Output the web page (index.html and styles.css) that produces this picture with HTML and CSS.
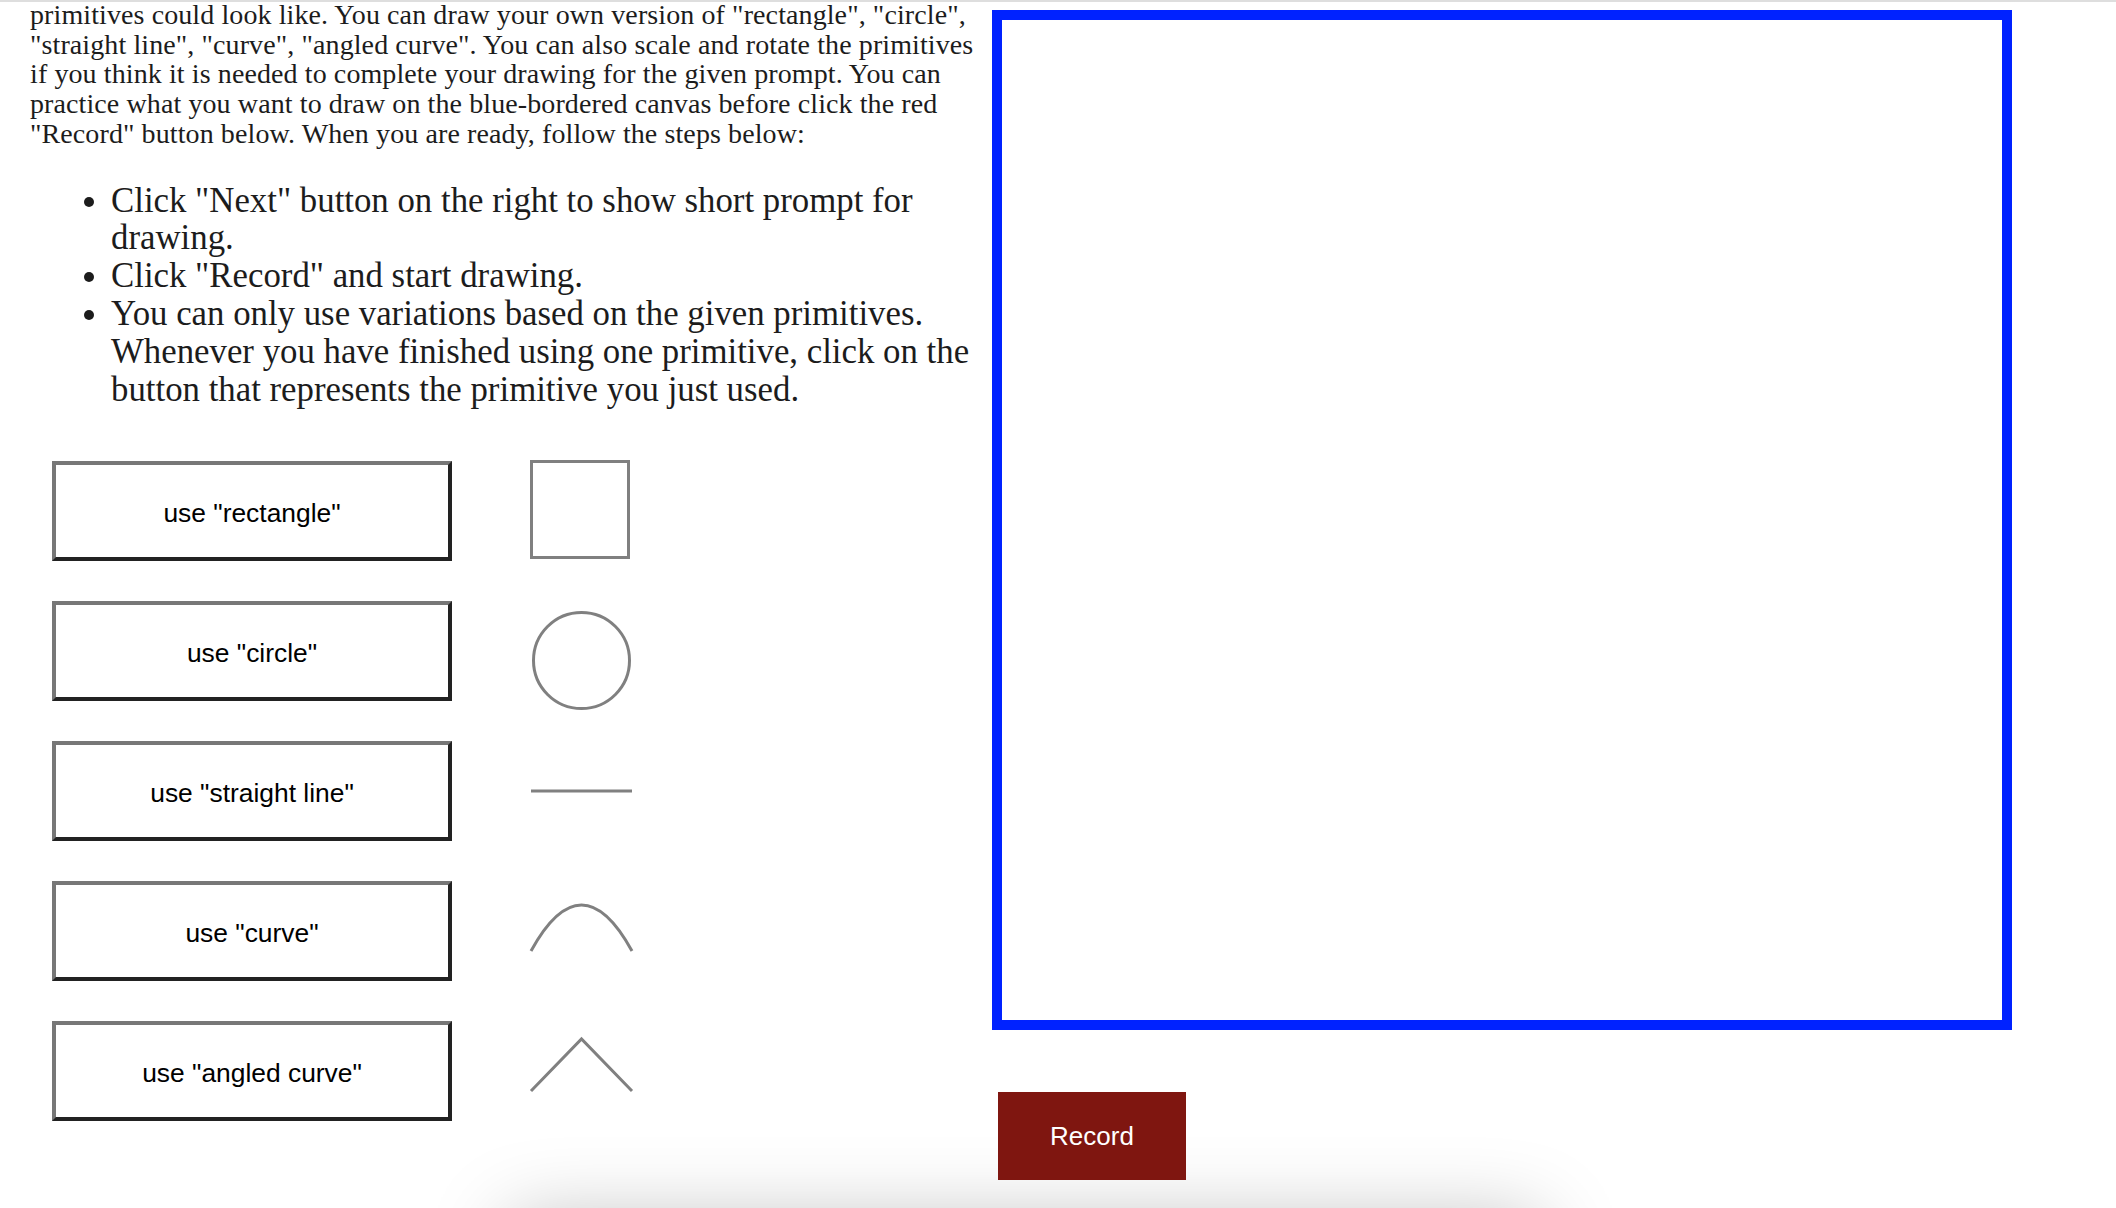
FILE: index.html
```html
<!DOCTYPE html>
<html lang="en">
<head>
<meta charset="utf-8">
<title>Drawing primitives</title>
<link rel="stylesheet" href="styles.css">
</head>
<body>
<div class="topbar"></div>
<div class="page">
  <div class="left">
    <p class="intro">primitives could look like. You can draw your own version of "rectangle", "circle", "straight line", "curve", "angled curve". You can also scale and rotate the primitives if you think it is needed to complete your drawing for the given prompt. You can practice what you want to draw on the blue-bordered canvas before click the red "Record" button below. When you are ready, follow the steps below:</p>
    <ul class="steps">
      <li>Click "Next" button on the right to show short prompt for drawing.</li>
      <li>Click "Record" and start drawing.</li>
      <li>You can only use variations based on the given primitives. Whenever you have finished using one primitive, click on the button that represents the primitive you just used.</li>
    </ul>
    <div class="prims">
      <div class="prim-row">
        <button class="prim-btn" type="button">use "rectangle"</button>
        <svg class="prim-icon" viewBox="0 0 108 116" width="108" height="116"><rect x="3.5" y="4.5" width="97" height="96" /></svg>
      </div>
      <div class="prim-row">
        <button class="prim-btn" type="button">use "circle"</button>
        <svg class="prim-icon" viewBox="0 0 108 116" width="108" height="116"><circle cx="53.5" cy="63.5" r="48" /></svg>
      </div>
      <div class="prim-row">
        <button class="prim-btn" type="button">use "straight line"</button>
        <svg class="prim-icon" viewBox="0 0 108 116" width="108" height="116"><line x1="3" y1="54" x2="104" y2="54" /></svg>
      </div>
      <div class="prim-row">
        <button class="prim-btn" type="button">use "curve"</button>
        <svg class="prim-icon" viewBox="0 0 108 116" width="108" height="116"><path d="M3 74 Q53.5 -18 104 74" /></svg>
      </div>
      <div class="prim-row">
        <button class="prim-btn" type="button">use "angled curve"</button>
        <svg class="prim-icon" viewBox="0 0 108 116" width="108" height="116"><path d="M3 74 L53.5 22 L104 74" /></svg>
      </div>
    </div>
  </div>
  <div class="right">
    <div class="canvas"></div>
    <button class="record" type="button">Record</button>
  </div>
</div>
<div class="below-card"></div>
</body>
</html>
```
FILE: styles.css
```css
html, body {
  margin: 0;
  padding: 0;
  background: #ffffff;
}

body {
  font-family: "Liberation Serif", "Times New Roman", serif;
  color: #1c1c1c;
  overflow-x: hidden;
}

.topbar {
  position: fixed;
  top: 0;
  left: 0;
  right: 0;
  height: 2px;
  background: #dedede;
  z-index: 5;
}

.page {
  display: flex;
  align-items: flex-start;
}

.left {
  width: 950px;
  padding-left: 30px;
  padding-right: 12px;
  flex: none;
}

.intro {
  margin: 0;
  font-size: 28px;
  line-height: 29.7px;
  letter-spacing: 0.1px;
}

.steps {
  margin: 33px 0 0 0;
  padding-left: 81px;
  font-size: 34.8px;
  line-height: 37.8px;
}

.prims {
  display: flex;
  flex-direction: column;
  gap: 40px;
  padding-top: 53px;
  padding-left: 22px;
}

.prim-row {
  display: flex;
  align-items: flex-start;
  gap: 76px;
  height: 100px;
}

.prim-btn {
  width: 400px;
  height: 100px;
  margin: 0;
  padding: 4px 0 0 0;
  flex: none;
  background: #ffffff;
  border-style: solid;
  border-width: 4px;
  border-color: #777777 #222222 #222222 #777777;
  font-family: "Liberation Sans", Arial, sans-serif;
  font-size: 26.4px;
  color: #000000;
}

.prim-icon {
  flex: none;
  margin-top: -4px;
  overflow: visible;
}

.prim-icon rect,
.prim-icon circle,
.prim-icon line,
.prim-icon path {
  fill: none;
  stroke: #808080;
  stroke-width: 3;
}

.right {
  display: flex;
  flex-direction: column;
  align-items: flex-start;
  padding-top: 10px;
  flex: none;
}

.canvas {
  width: 1000px;
  height: 1000px;
  border: 10px solid #0022ff;
  background: #ffffff;
}

.record {
  margin: 62px 0 0 6px;
  width: 188px;
  height: 88px;
  padding: 0;
  border: none;
  background: #7f1610;
  color: #ffffff;
  font-family: "Liberation Sans", Arial, sans-serif;
  font-size: 26px;
}

.below-card {
  margin: 40px 0 0 510px;
  width: 1030px;
  height: 200px;
  background: #ffffff;
  box-shadow: 0 0 80px rgba(0, 0, 0, 0.26);
}
```
